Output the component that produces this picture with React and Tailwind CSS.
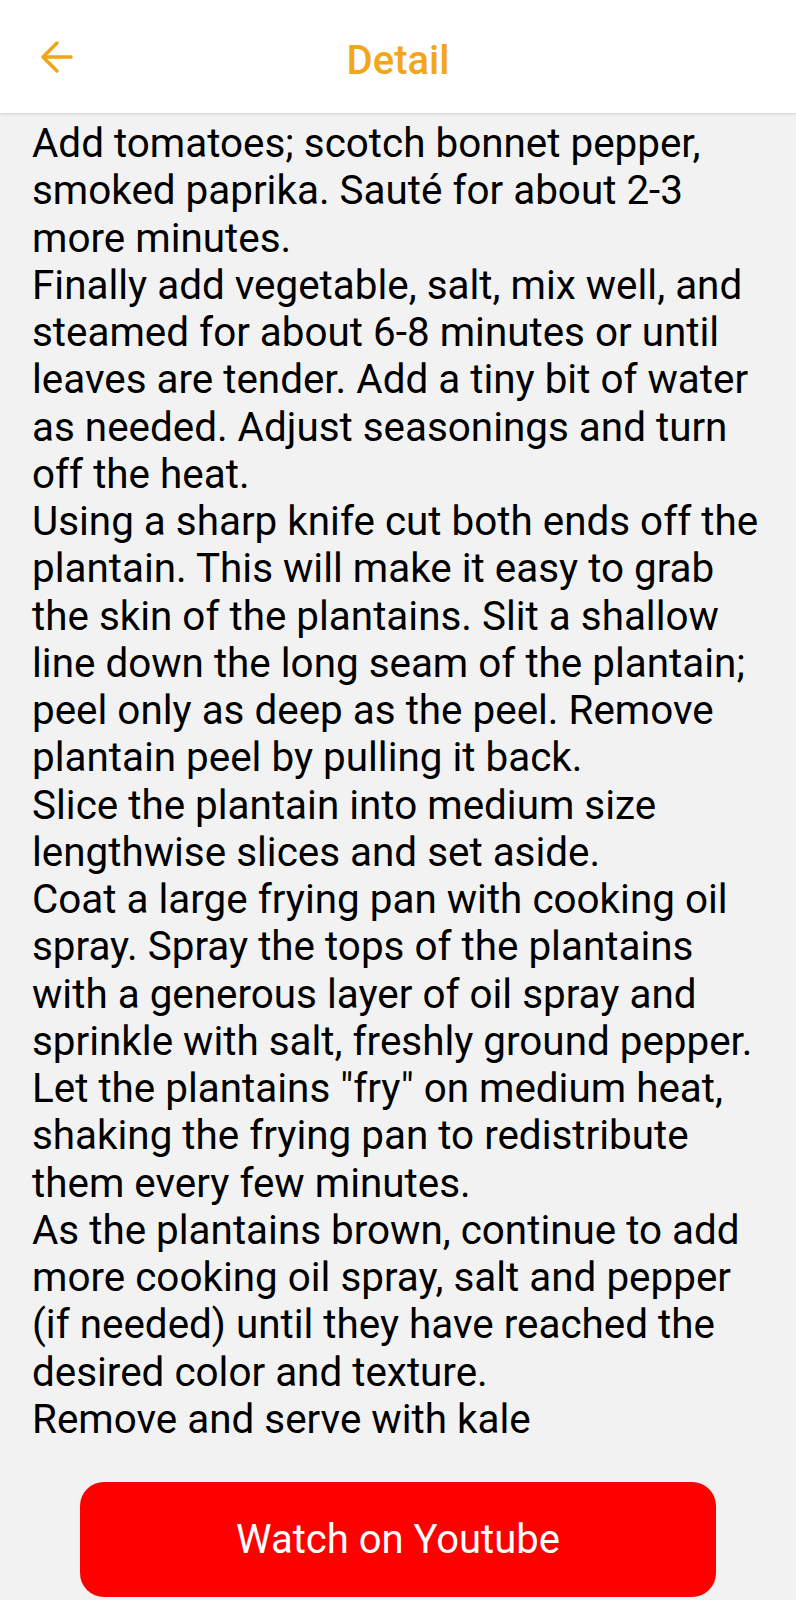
import React from 'react'

const steps = [
  'Add tomatoes; scotch bonnet pepper, smoked paprika. Sauté for about 2-3 more minutes.',
  'Finally add vegetable, salt, mix well, and steamed for about 6-8 minutes or until leaves are tender. Add a tiny bit of water as needed. Adjust seasonings and turn off the heat.',
  'Using a sharp knife cut both ends off the plantain. This will make it easy to grab the skin of the plantains. Slit a shallow line down the long seam of the plantain; peel only as deep as the peel. Remove plantain peel by pulling it back.',
  'Slice the plantain into medium size lengthwise slices and set aside.',
  'Coat a large frying pan with cooking oil spray. Spray the tops of the plantains with a generous layer of oil spray and sprinkle with salt, freshly ground pepper.',
  'Let the plantains "fry" on medium heat, shaking the frying pan to redistribute them every few minutes.',
  'As the plantains brown, continue to add more cooking oil spray, salt and pepper (if needed) until they have reached the desired color and texture.',
  'Remove and serve with kale',
]

const App = () => {
  return (
    <div className="min-h-[1600px] bg-[#f2f2f2] font-['Roboto',sans-serif] flex flex-col">
      {/* Top bar */}
      <div className="h-[113px] bg-white shadow-[0_1px_3px_rgba(0,0,0,0.15)] flex items-center relative">
        <button className="w-[114px] h-full flex items-center justify-center">
          <svg width="32" height="32" viewBox="0 0 32 32" fill="none" stroke="#f0a41a" strokeWidth="3.5" strokeLinecap="round" strokeLinejoin="round">
            <path d="M30 16H3" />
            <path d="M16 2L2 16l14 14" />
          </svg>
        </button>
        <h1 className="absolute left-0 right-0 pt-[9px] text-center text-[40px] font-medium text-[#f2a71b] pointer-events-none leading-none">
          Detail
        </h1>
      </div>

      {/* Directions */}
      <div className="px-8 pt-[7px] text-[40.4px] leading-[47.25px] text-black">
        {steps.map((s, i) => (
          <p key={i}>{s}</p>
        ))}
      </div>

      <div className="flex justify-center pt-[39px]">
        <button className="w-[636px] h-[115px] rounded-[24px] bg-[#ff0000] text-white text-[40px]">
          Watch on Youtube
        </button>
      </div>
    </div>
  )
}

export default App
